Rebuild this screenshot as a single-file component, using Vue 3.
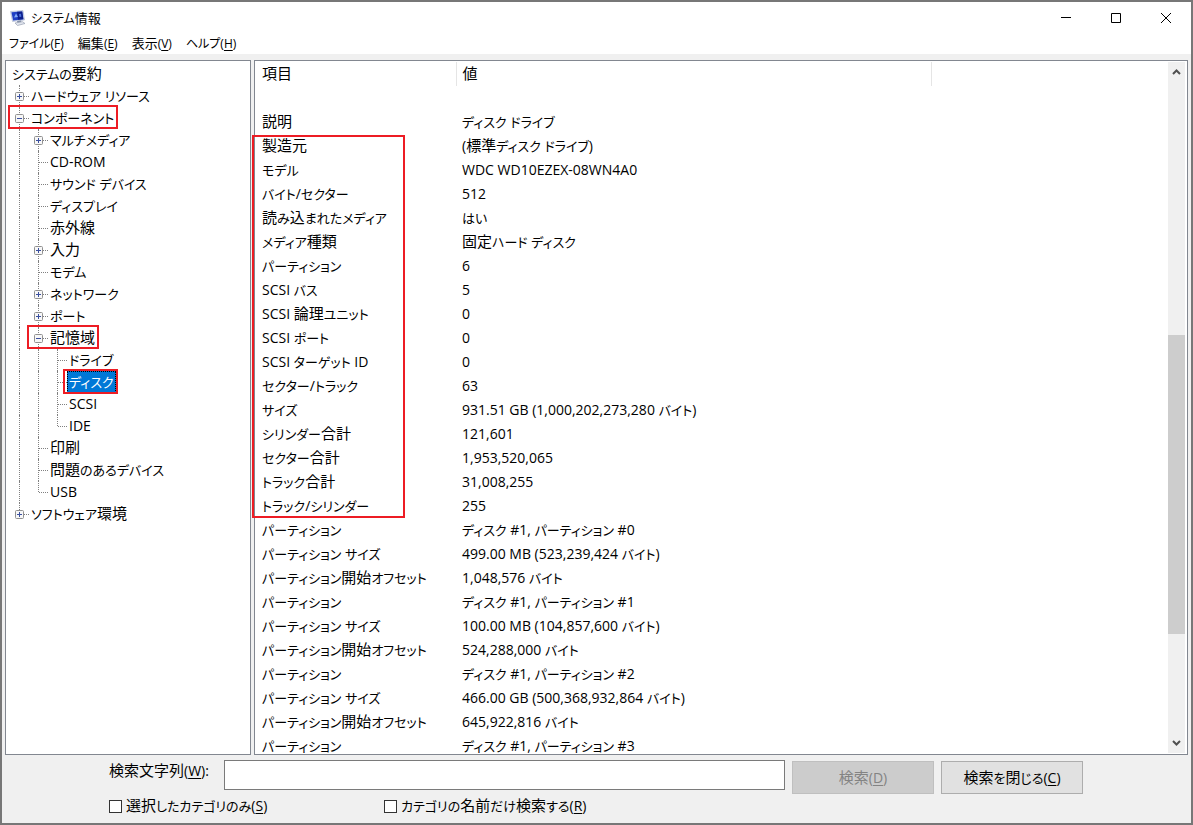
<script setup>
import { h, ref } from 'vue'

// Splits a string into kana, kanji and Latin runs so each script gets its own size.
const RUNS = /[\u3040-\u30ff]+|[\u4e00-\u9fff]+|[^\u3040-\u30ff\u4e00-\u9fff]+/g
function Jp(props) {
  return (props.text.match(RUNS) || []).map((run) => {
    if (/^[\u3040-\u30ff]/.test(run)) return h('span', { class: 'kana' }, run)
    if (/^[\u4e00-\u9fff]/.test(run)) return h('span', { class: 'kanji' }, run)
    return run
  })
}
Jp.props = ['text']

const menus = [
  ['ファイル', 'F'],
  ['編集', 'E'],
  ['表示', 'V'],
  ['ヘルプ', 'H'],
]

// guides: one code per indent cell.
// v = through line, t = branch, l = last branch, p/m = plus/minus box, P = plus box that ends its line
const tree = [
  { guides: '', label: 'システムの要約' },
  { guides: 'p', label: 'ハードウェア リソース' },
  { guides: 'm', label: 'コンポーネント', mark: 'parent' },
  { guides: 'vp', label: 'マルチメディア' },
  { guides: 'vt', label: 'CD-ROM' },
  { guides: 'vt', label: 'サウンド デバイス' },
  { guides: 'vt', label: 'ディスプレイ' },
  { guides: 'vt', label: '赤外線' },
  { guides: 'vp', label: '入力' },
  { guides: 'vt', label: 'モデム' },
  { guides: 'vp', label: 'ネットワーク' },
  { guides: 'vp', label: 'ポート' },
  { guides: 'vm', label: '記憶域', mark: 'parent' },
  { guides: 'vvt', label: 'ドライブ' },
  { guides: 'vvt', label: 'ディスク', mark: 'leaf' },
  { guides: 'vvt', label: 'SCSI' },
  { guides: 'vvl', label: 'IDE' },
  { guides: 'vt', label: '印刷' },
  { guides: 'vt', label: '問題のあるデバイス' },
  { guides: 'vl', label: 'USB' },
  { guides: 'P', label: 'ソフトウェア環境' },
]
const selected = ref('ディスク')

const rows = [
  ['', ''],
  ['説明', 'ディスク ドライブ'],
  ['製造元', '(標準ディスク ドライブ)'],
  ['モデル', 'WDC WD10EZEX-08WN4A0'],
  ['バイト/セクター', '512'],
  ['読み込まれたメディア', 'はい'],
  ['メディア種類', '固定ハード ディスク'],
  ['パーティション', '6'],
  ['SCSI バス', '5'],
  ['SCSI 論理ユニット', '0'],
  ['SCSI ポート', '0'],
  ['SCSI ターゲット ID', '0'],
  ['セクター/トラック', '63'],
  ['サイズ', '931.51 GB (1,000,202,273,280 バイト)'],
  ['シリンダー合計', '121,601'],
  ['セクター合計', '1,953,520,065'],
  ['トラック合計', '31,008,255'],
  ['トラック/シリンダー', '255'],
  ['パーティション', 'ディスク #1, パーティション #0'],
  ['パーティション サイズ', '499.00 MB (523,239,424 バイト)'],
  ['パーティション開始オフセット', '1,048,576 バイト'],
  ['パーティション', 'ディスク #1, パーティション #1'],
  ['パーティション サイズ', '100.00 MB (104,857,600 バイト)'],
  ['パーティション開始オフセット', '524,288,000 バイト'],
  ['パーティション', 'ディスク #1, パーティション #2'],
  ['パーティション サイズ', '466.00 GB (500,368,932,864 バイト)'],
  ['パーティション開始オフセット', '645,922,816 バイト'],
  ['パーティション', 'ディスク #1, パーティション #3'],
]

const query = ref('')
const categoryOnly = ref(false)
const namesOnly = ref(false)
</script>

<template>
  <div class="window">
    <header class="titlebar">
      <svg class="app-icon" viewBox="0 0 16 16" aria-hidden="true">
        <path d="M.5 1.500l12.500-1 1.500 9.500-12 1.500z" fill="#cdd6ea" stroke="#aab4cc" stroke-width=".6" />
        <path d="M1.500 2.300l10.700-.9 1.200 7.800-10.300 1.200z" fill="#1f3fc4" />
        <path d="M7 1.800l5.200-.4 1.200 7.800-5.400.6z" fill="#0d1f8c" />
        <path d="M4 7.500l2-4 2 3.500z" fill="#86adf7" />
        <path d="M9 4l2-.2.3 3-1.800.2z" fill="#4c72e0" />
        <path d="M7 11l4-.5.5 2-4 .5z" fill="#8490a8" />
        <path d="M5 13l7.500-1.300 2.500 1.800-7.500 2z" fill="#e2e6ee" stroke="#98a1b3" stroke-width=".7" />
      </svg>
      <h1 class="title"><Jp text="システム情報" /></h1>
      <div class="captions">
        <button type="button" aria-label="最小化"><svg viewBox="0 0 12 12"><path d="M1 5.500h10" /></svg></button>
        <button type="button" aria-label="最大化"><svg viewBox="0 0 12 12"><path d="M1.500 1.500h9v9h-9z" /></svg></button>
        <button type="button" aria-label="閉じる"><svg viewBox="0 0 12 12"><path d="M1 1l10 10M11 1L1 11" /></svg></button>
      </div>
    </header>

    <nav class="menubar">
      <button v-for="[name, key] in menus" :key="key" type="button"><Jp :text="name" />(<u>{{ key }}</u>)</button>
    </nav>

    <main class="panes">
      <ul class="tree">
        <li v-for="item in tree" :key="item.label">
          <span v-for="(g, i) in item.guides" :key="i" class="guide" :class="'g-' + g">
            <button v-if="'pmP'.includes(g)" type="button" class="toggle" :aria-label="item.label + 'の展開'">
              <svg viewBox="0 0 9 9">
                <rect x=".5" y=".5" width="8" height="8" rx="1" fill="#f7f7f7" stroke="#919191" />
                <path :d="g === 'm' ? 'M2 4.500h5' : 'M2 4.500h5M4.500 2v5'" stroke="#3a4f9f" />
              </svg>
            </button>
          </span>
          <span class="node">
            <button type="button" class="label" :class="{ selected: selected === item.label }" @click="selected = item.label"><Jp :text="item.label" /></button>
            <span v-if="item.mark" class="mark" :class="item.mark"></span>
          </span>
        </li>
      </ul>

      <section class="details">
        <div class="viewport">
          <table>
            <colgroup><col class="c-name" /><col class="c-value" /><col /></colgroup>
            <thead>
              <tr><th scope="col"><Jp text="項目" /></th><th scope="col"><Jp text="値" /></th><td></td></tr>
            </thead>
            <tbody>
              <tr v-for="(row, i) in rows" :key="i"><td><Jp :text="row[0]" /></td><td><Jp :text="row[1]" /></td><td></td></tr>
            </tbody>
          </table>
        </div>
        <div class="scrollbar">
          <button type="button" aria-label="上へ"><svg viewBox="0 0 9 6"><path d="M1 5l3.500-3.500L8 5" /></svg></button>
          <div class="track"><i class="before"></i><i class="thumb"></i><i class="after"></i></div>
          <button type="button" aria-label="下へ"><svg viewBox="0 0 9 6"><path d="M1 1l3.500 3.500L8 1" /></svg></button>
        </div>
        <span class="mark range"></span>
      </section>
    </main>

    <form class="search" @submit.prevent>
      <div class="line">
        <label class="caption" for="query"><Jp text="検索文字列" />(<u>W</u>):</label>
        <input id="query" v-model="query" class="query" type="text" />
        <button type="submit" class="push" disabled><Jp text="検索" />(<u>D</u>)</button>
        <button type="button" class="push"><Jp text="検索を閉じる" />(<u>C</u>)</button>
      </div>
      <div class="options">
        <label><input v-model="categoryOnly" type="checkbox" /><span><Jp text="選択したカテゴリのみ" />(<u>S</u>)</span></label>
        <label><input v-model="namesOnly" type="checkbox" /><span><Jp text="カテゴリの名前だけ検索する" />(<u>R</u>)</span></label>
      </div>
    </form>
  </div>
</template>

<style>
body {
  margin: 0;
}
.kana {
  font-size: 13px;
  line-height: 1;
}
.kanji {
  font-size: 15px;
  line-height: 1;
}
.title .kana,
.menubar .kana {
  font-size: 12px;
}
.title .kanji,
.menubar .kanji {
  font-size: 13px;
}
</style>

<style scoped>
.window {
  display: flex;
  flex-direction: column;
  box-sizing: border-box;
  height: 100vh;
  border: 2px solid #777;
  background: #f0f0f0;
  color: #000;
  font: 14px/22px "Open Sans", "Noto Sans CJK JP", sans-serif;
  font-feature-settings: "palt";
}
button,
input {
  font: inherit;
  font-feature-settings: inherit;
  color: inherit;
}
button {
  padding: 0;
  border: 0;
  background: none;
}
u {
  text-underline-offset: 2px;
}
.titlebar {
  display: flex;
  align-items: center;
  height: 32px;
  padding-left: 8px;
  background: #fff;
}
.app-icon {
  width: 16px;
  height: 16px;
}
.title {
  flex: 1;
  margin: 0 0 0 5px;
  font-size: 13px;
  font-weight: 400;
}
.captions {
  display: flex;
}
.captions button {
  display: grid;
  place-items: center;
  width: 50px;
  height: 30px;
}
.captions svg {
  width: 12px;
  height: 12px;
  fill: none;
  stroke: #000;
}
.menubar {
  display: flex;
  gap: 14px;
  height: 20px;
  padding-left: 7px;
  background: #fff;
}
.menubar button {
  font-size: 12px;
  line-height: 20px;
}
.panes {
  display: flex;
  flex: 1;
  gap: 3px;
  min-height: 0;
  padding: 6px 3px 0;
}
.tree,
.details {
  box-sizing: border-box;
  border: 1px solid #828790;
  background: #fff;
}
.tree {
  flex: none;
  width: 246px;
  margin: 0;
  padding: 2px 0 0 4px;
  list-style: none;
}
.tree li {
  display: flex;
  height: 22px;
}
.guide {
  position: relative;
  width: 19px;
}
.guide::before,
.guide::after {
  content: "";
  position: absolute;
}
.guide::before {
  top: 0;
  bottom: 0;
  left: 9px;
  border-left: 1px dotted #808080;
}
.g-l::before,
.g-P::before {
  bottom: 11px;
}
.guide:not(.g-v)::after {
  top: 11px;
  left: 10px;
  right: 0;
  border-top: 1px dotted #808080;
}
.toggle {
  position: absolute;
  z-index: 1;
  top: 7px;
  left: 5px;
  width: 9px;
  height: 9px;
}
.toggle svg {
  display: block;
}
.node {
  position: relative;
}
.label {
  display: block;
  height: 22px;
  padding: 0 2px;
  white-space: nowrap;
}
.label.selected {
  background: #0078d7;
  color: #fff;
  outline: 1px dotted #000;
  outline-offset: -1px;
}
.mark {
  position: absolute;
  box-sizing: border-box;
  border: 2px solid #ed1c24;
  pointer-events: none;
}
.parent {
  inset: -2px -2px 0 -21px;
}
.leaf {
  inset: -2px -2px -1px -4px;
}
.details {
  position: relative;
  display: flex;
  flex: 1;
  min-width: 0;
  padding: 1px;
}
.viewport {
  flex: 1;
  overflow: hidden;
}
table {
  width: 100%;
  table-layout: fixed;
  border-collapse: collapse;
}
.c-name {
  width: 200px;
}
.c-value {
  width: 475px;
}
th,
td {
  height: 24px;
  padding: 0 6px;
  line-height: 24px;
  font-weight: 400;
  text-align: left;
  white-space: nowrap;
}
th {
  border-right: 1px solid #e5e5e5;
}
.scrollbar {
  display: flex;
  flex-direction: column;
  width: 17px;
  margin-right: 1px;
  background: #f0f0f0;
}
.scrollbar button {
  display: grid;
  place-items: center;
  height: 20px;
}
.scrollbar svg {
  width: 9px;
  height: 6px;
  fill: none;
  stroke: #505050;
  stroke-width: 2;
}
.track {
  display: flex;
  flex: 1;
  flex-direction: column;
}
.before {
  flex: 253;
}
.thumb {
  flex: 299;
  background: #cdcdcd;
}
.after {
  flex: 99;
}
.range {
  top: 74px;
  left: -3px;
  width: 153px;
  height: 383px;
}
.search {
  padding: 5px 108px 0 107px;
}
.line {
  display: flex;
  align-items: flex-start;
}
.caption {
  width: 115px;
}
.query {
  flex: 1;
  box-sizing: border-box;
  min-width: 0;
  height: 30px;
  border: 1px solid #7a7a7a;
  background: #fff;
}
.push {
  box-sizing: border-box;
  width: 142px;
  height: 33px;
  margin: 1px 0 0 7px;
  border: 1px solid #adadad;
  background: #e1e1e1;
}
.push:disabled {
  border-color: #bfbfbf;
  background: #ccc;
  color: #838383;
}
.options {
  display: grid;
  grid-template-columns: 275px 1fr;
  height: 29px;
}
.options label {
  display: flex;
  align-items: center;
  height: 24px;
}
.options input {
  appearance: none;
  box-sizing: border-box;
  width: 13px;
  height: 13px;
  margin: 0 4px 0 0;
  border: 1px solid #333;
  background: #fff;
}
.options input:checked {
  box-shadow: inset 0 0 0 2px #fff;
  background: #333;
}
</style>
